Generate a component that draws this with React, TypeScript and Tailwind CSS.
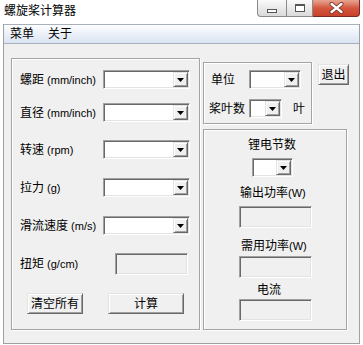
import React from 'react';

const sunken =
  'border border-t-[#a0a0a0] border-l-[#a0a0a0] border-b-white border-r-white shadow-[inset_1px_1px_0_#696969,inset_-1px_-1px_0_#e3e3e3]';
const raised =
  'border border-t-[#e3e3e3] border-l-[#e3e3e3] border-b-[#696969] border-r-[#696969] shadow-[inset_1px_1px_0_#fff,inset_-1px_-1px_0_#a0a0a0] bg-[#f0f0f0]';
const group = 'border border-[#a5a5a5] shadow-[inset_1px_1px_0_#fff,1px_1px_0_#fff]';

const Arrow = () => (
  <svg width="7" height="4" viewBox="0 0 7 4">
    <path d="M0 0h7L3.5 4z" fill="#000" />
  </svg>
);

const Combo: React.FC<{ className: string }> = ({ className }) => (
  <div className={`${sunken} bg-white flex p-[1px] ${className}`}>
    <div className="flex-1" />
    <div className={`${raised} w-[15px] flex items-center justify-center`}>
      <Arrow />
    </div>
  </div>
);

const Field: React.FC<{ className: string }> = ({ className }) => (
  <div className={`${sunken} bg-[#f0f0f0] ${className}`} />
);

const Btn: React.FC<{ className: string; children: React.ReactNode }> = ({ className, children }) => (
  <div className={`${raised} flex items-center justify-center text-[12px] ${className}`}>{children}</div>
);

const Label: React.FC<{ cn: string; en?: string; gap?: boolean; className: string }> = ({
  cn,
  en,
  gap = true,
  className,
}) => (
  <span className={`whitespace-nowrap text-[12px] ${className}`}>
    {cn}
    {en && <span className="text-[11px]">{gap ? ' ' : ''}{en}</span>}
  </span>
);

const App: React.FC = () => {
  return (
    <div className="w-[363px] h-[345px] overflow-hidden bg-white text-black leading-[14px] font-['Liberation_Sans','Noto_Sans_CJK_SC',sans-serif]">
      {/* 标题栏 */}
      <div className="h-[24px] flex items-start">
        <span className="ml-[4px] mt-[4px] text-[12px]">螺旋桨计算器</span>
        <div className="ml-auto mr-[3px] flex h-[17px]">
          <div className="w-[30px] flex items-end justify-center pb-[3px] border border-t-0 border-[#8a8a8a] rounded-bl-[4px] bg-gradient-to-b from-[#fafafa] to-[#dadada]">
            <div className="w-[10px] h-[4px] border border-[#555] bg-white" />
          </div>
          <div className="w-[26px] flex items-center justify-center border-b border-r border-[#8a8a8a] bg-gradient-to-b from-[#fafafa] to-[#dadada]">
            <div className="w-[10px] h-[8px] border border-[#555] border-t-2 bg-white" />
          </div>
          <div className="w-[47px] flex items-center justify-center border-b border-r border-[#7a2a20] rounded-br-[4px] bg-gradient-to-b from-[#e6a493] via-[#d4573f] to-[#c7412b]">
            <svg width="15" height="12" viewBox="0 0 15 12">
              <path d="M2.5 2l10 8M12.5 2l-10 8" stroke="#6b2a20" strokeWidth="4" strokeLinecap="round" />
              <path d="M2.5 2l10 8M12.5 2l-10 8" stroke="#fff" strokeWidth="2.4" strokeLinecap="round" />
            </svg>
          </div>
        </div>
      </div>

      {/* 窗口客户区 */}
      <div className="ml-[3px] w-[357px] h-[320px] border-l border-r border-b border-[#a0a0a0] bg-[#f0f0f0] flex flex-col">
        <div className="h-[20px] shrink-0 border-t border-b border-[#a8b0bc] bg-gradient-to-b from-[#fcfdff] to-[#dae4f3] flex items-center pl-[6px] text-[12px]">
          <span>菜单</span>
          <span className="ml-[14px]">关于</span>
        </div>

        <div className="flex">
          {/* 左侧参数 */}
          <div className={`${group} ml-[7px] mt-[14px] w-[189px] h-[272px] flex flex-col pl-[8px]`}>
            <div className="mt-[11px] h-[19px] flex items-center">
              <Label cn="螺距" en="(mm/inch)" className="w-[83px]" />
              <Combo className="w-[87px] h-[19px]" />
            </div>
            <div className="mt-[14px] h-[19px] flex items-center">
              <Label cn="直径" en="(mm/inch)" className="w-[83px]" />
              <Combo className="w-[87px] h-[19px]" />
            </div>
            <div className="mt-[18px] h-[19px] flex items-center">
              <Label cn="转速" en="(rpm)" className="w-[83px]" />
              <Combo className="w-[87px] h-[19px]" />
            </div>
            <div className="mt-[19px] h-[19px] flex items-center">
              <Label cn="拉力" en="(g)" className="w-[83px]" />
              <Combo className="w-[87px] h-[19px]" />
            </div>
            <div className="mt-[19px] h-[19px] flex items-center">
              <Label cn="滑流速度" en="(m/s)" className="w-[83px]" />
              <Combo className="w-[87px] h-[19px]" />
            </div>
            <div className="mt-[18px] h-[22px] flex items-center">
              <Label cn="扭矩" en="(g/cm)" className="w-[95px]" />
              <Field className="w-[73px] h-[22px]" />
            </div>
            <div className="mt-[18px] flex">
              <Btn className="ml-[7px] w-[56px] h-[21px]">清空所有</Btn>
              <Btn className="ml-[25px] w-[76px] h-[21px]">计算</Btn>
            </div>
          </div>

          {/* 右侧 */}
          <div className="ml-[3px] flex flex-col">
            <div className="flex items-start">
              <div className={`${group} mt-[18px] w-[109px] h-[62px] flex flex-col`}>
                <div className="mt-[7px] h-[19px] flex items-center">
                  <Label cn="单位" className="ml-[7px] w-[38px]" />
                  <Combo className="w-[52px] h-[19px]" />
                </div>
                <div className="mt-[10px] h-[19px] flex items-center">
                  <Label cn="桨叶数" className="ml-[5px] w-[40px]" />
                  <Combo className="w-[33px] h-[19px]" />
                  <Label cn="叶" className="ml-[11px]" />
                </div>
              </div>
              <Btn className="ml-[6px] mt-[20px] w-[31px] h-[21px]">退出</Btn>
            </div>

            <div className={`${group} mt-[5px] w-[144px] h-[201px] flex flex-col items-start`}>
              <Label cn="锂电节数" className="mt-[8px] ml-[44px]" />
              <Combo className="mt-[6px] ml-[48px] w-[41px] h-[19px]" />
              <Label cn="输出功率" en="(W)" gap={false} className="mt-[9px] ml-[36px]" />
              <Field className="mt-[6px] ml-[35px] w-[73px] h-[22px]" />
              <Label cn="需用功率" en="(W)" gap={false} className="mt-[11px] ml-[37px]" />
              <Field className="mt-[3px] ml-[35px] w-[73px] h-[22px]" />
              <Label cn="电流" className="mt-[5px] ml-[53px]" />
              <Field className="mt-[2px] ml-[35px] w-[73px] h-[22px]" />
            </div>
          </div>
        </div>
      </div>
    </div>
  );
};

export default App;
